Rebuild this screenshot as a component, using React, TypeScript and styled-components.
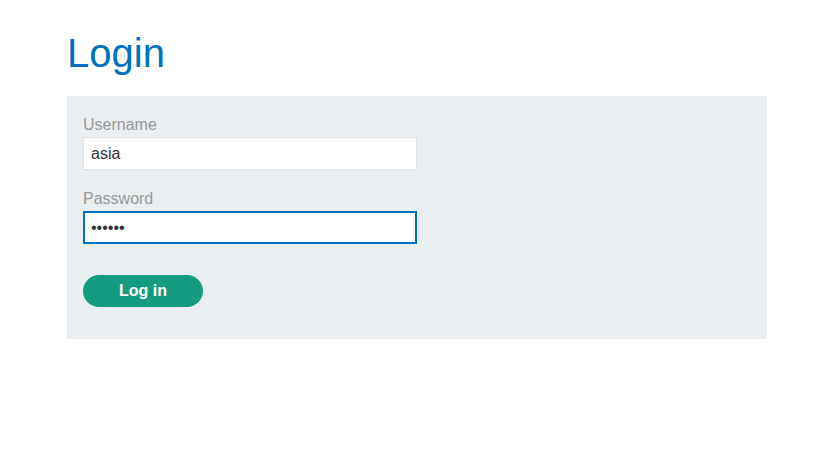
import * as React from 'react'
import styled, { createGlobalStyle } from 'styled-components'

const GlobalStyle = createGlobalStyle`
  body {
    margin: 0;
    background: #fff;
    font-family: "Liberation Sans", Arial, sans-serif;
  }
`

const Page = styled.div`
  width: 700px;
  margin-left: 67px;
  padding-top: 29px;
`

const Title = styled.h1`
  margin: 0 0 19px 0;
  font-size: 40px;
  line-height: 48px;
  font-weight: 400;
  color: #0071bc;
`

const Panel = styled.form`
  background: #e9eef1;
  padding: 19px 16px 32px 16px;
  display: flex;
  flex-direction: column;
  align-items: flex-start;
`

const Label = styled.label`
  display: block;
  font-size: 16px;
  line-height: 19px;
  color: #999;
  margin-bottom: 3px;
`

const Field = styled.div`
  margin-bottom: 19px;
`

const Input = styled.input<{ $focused?: boolean }>`
  box-sizing: border-box;
  width: 334px;
  height: 33px;
  margin: 0;
  padding: 0 ${({ $focused }) => ($focused ? '6px' : '7px')};
  font-family: "Liberation Sans", Arial, sans-serif;
  font-size: 16px;
  color: #333;
  background: #fff;
  border: ${({ $focused }) => ($focused ? '2px solid #0071bc' : '1px solid #e0e3e5')};
  outline: none;
  border-radius: 0;
`

const Button = styled.button`
  margin-top: 12px;
  width: 120px;
  height: 32px;
  border: none;
  border-radius: 16px;
  background: #159b80;
  color: #fff;
  font-family: "Liberation Sans", Arial, sans-serif;
  font-size: 16px;
  font-weight: 700;
  cursor: pointer;
`

export default function App() {
  return (
    <>
      <GlobalStyle />
      <Page>
        <Title>Login</Title>
        <Panel onSubmit={e => e.preventDefault()}>
          <Field>
            <Label htmlFor="username">Username</Label>
            <Input id="username" defaultValue="asia" />
          </Field>
          <Field>
            <Label htmlFor="password">Password</Label>
            <Input id="password" type="password" defaultValue="secret" $focused />
          </Field>
          <Button type="submit">Log in</Button>
        </Panel>
      </Page>
    </>
  )
}
